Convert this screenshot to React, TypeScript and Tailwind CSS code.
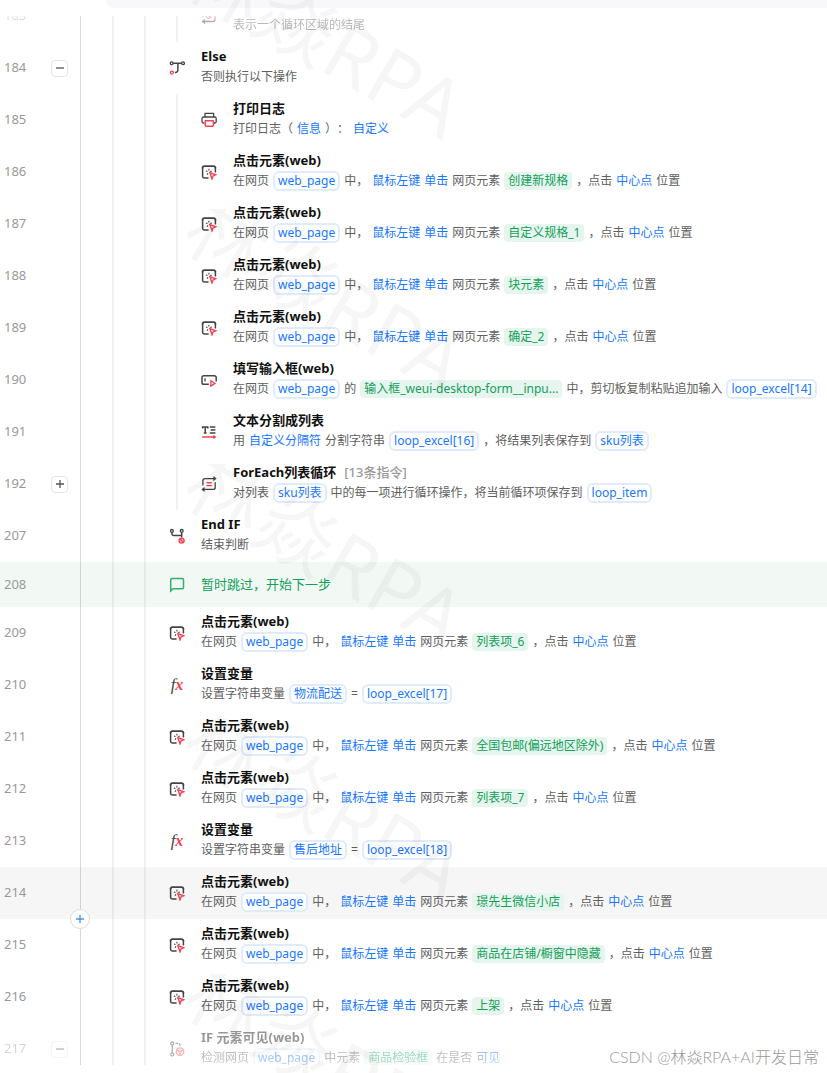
import React from 'react';

type Part = string | { kind: 'link' | 'var' | 'el'; text: string };

type Step = {
  no: number;
  level: 3 | 4;
  icon: React.FC;
  title?: string;
  hint?: string;
  parts?: Part[];
  comment?: string;
  toggle?: 'open' | 'closed';
  selected?: boolean;
  fade?: 'top' | 'bottom';
};

const link = (text: string): Part => ({ kind: 'link', text });
const variable = (text: string): Part => ({ kind: 'var', text });
const element = (text: string): Part => ({ kind: 'el', text });

// ---- Icons ----

const DARK = '#444444';
const RED = '#f5424e';

const Svg: React.FC<{ children: React.ReactNode }> = ({ children }) => (
  <svg viewBox="0 0 16 16" className="h-4 w-4" fill="none" stroke={DARK} strokeWidth="1.3" aria-hidden="true">
    {children}
  </svg>
);

const LoopEndIcon: React.FC = () => (
  <Svg>
    <path d="M2 9V4.5a2 2 0 0 1 2-2h9.5M14 5v6.5a2 2 0 0 1-2 2H2M4 11.5l-2.5 2L4 15.5" />
    <circle cx="7.5" cy="7.5" r="2.8" stroke={RED} />
    <path d="M5.8 6l3.4 3" stroke={RED} />
  </Svg>
);

const ElseIcon: React.FC = () => (
  <Svg>
    <circle cx="2.7" cy="3.3" r="1.4" />
    <circle cx="14" cy="3.3" r="1.4" />
    <path d="M4.2 3.3h8.3M8.9 3.3V10a2.4 2.4 0 0 1-2.4 2.4H6" strokeWidth="1.5" />
    <circle cx="2.9" cy="12.6" r="1.5" stroke={RED} />
  </Svg>
);

const PrintIcon: React.FC = () => (
  <Svg>
    <path d="M4 5V1.4h8.6V5" />
    <path d="M3.2 11H2.4A1.4 1.4 0 0 1 1 9.6V6.6A1.6 1.6 0 0 1 2.6 5h11A1.6 1.6 0 0 1 15.2 6.6v3A1.4 1.4 0 0 1 13.8 11H13" />
    <path d="M3.8 8.8h9M4.2 8.8v4.4a1 1 0 0 0 1 1h6.2a1 1 0 0 0 1-1V8.8" stroke={RED} strokeWidth="1.5" />
  </Svg>
);

const ClickIcon: React.FC = () => (
  <Svg>
    <path d="M7.6 14H3.3a1.7 1.7 0 0 1-1.7-1.7V3.2M14.4 3.2v5.2" strokeWidth="1.5" />
    <path d="M1.6 4.2V3.9a1.7 1.7 0 0 1 1.7-1.7h9.4a1.7 1.7 0 0 1 1.7 1.7v.3" strokeWidth="1.8" />
    <path d="M7.9 4.8v1.6M4.9 7.1l1.6.5M10.8 7.1l-1.6.5M6 10.8l.9-1.5" strokeWidth="1.1" />
    <path d="M8.9 8.6l5.7 2.2-2.6 1.1-1 2.9z" stroke={RED} strokeWidth="1.4" />
  </Svg>
);

const InputIcon: React.FC = () => (
  <Svg>
    <path
      d="M7.8 12.2H2.8A1.8 1.8 0 0 1 1 10.4V5.6a1.8 1.8 0 0 1 1.8-1.8h10.6a1.8 1.8 0 0 1 1.8 1.8v4"
      strokeWidth="1.5"
    />
    <path d="M4 6.2v3.4" />
    <path d="M9.8 8.8l4.2 2.6-4.2 2.6z" stroke={RED} />
  </Svg>
);

const SplitIcon: React.FC = () => (
  <Svg>
    <path d="M1.6 4.4V2.9h5.2v1.5M4.2 2.9v6M2.8 8.9h2.8" strokeWidth="1.5" />
    <path d="M8.8 3h5.6M9.6 6h4.8M8.8 9h5.6" />
    <path d="M1.2 13h12.6M12.4 11.6l1.8 1.4-1.8 1.4" stroke={RED} strokeWidth="1.4" />
  </Svg>
);

const ForEachIcon: React.FC = () => (
  <Svg>
    <path d="M1.9 9.6V4.6a2 2 0 0 1 2-2h10M12.4 0.8l2.2 1.8-2.2 1.8" />
    <path d="M14.2 6.2v5.2a2 2 0 0 1-2 2H2M3.6 11.6l-2.2 1.8 2.2 1.8" />
    <path d="M5.4 6.7h5.4M5.4 9.6h5.4" stroke={RED} strokeWidth="1.4" />
  </Svg>
);

const EndIfIcon: React.FC = () => (
  <Svg>
    <circle cx="2.9" cy="2.9" r="1.4" />
    <circle cx="12.7" cy="2.9" r="1.4" />
    <path d="M2.9 4.4v1.4a1.6 1.6 0 0 0 1.6 1.6h8.2M12.7 4.4v5" strokeWidth="1.5" />
    <circle cx="12.6" cy="12.6" r="2.5" fill="#fbd3d6" stroke={RED} strokeWidth="1.4" />
    <path d="M11 11l3.2 3.2" stroke={RED} />
  </Svg>
);

const CommentIcon: React.FC = () => (
  <Svg>
    <path
      d="M1.7 14V2.8a1.2 1.2 0 0 1 1.2-1.2h10.4a1.2 1.2 0 0 1 1.2 1.2v7.8a1.2 1.2 0 0 1-1.2 1.2H4z"
      stroke="#37ad6e"
      strokeWidth="1.5"
    />
  </Svg>
);

const FxIcon: React.FC = () => (
  <span className="block text-center font-['Liberation_Serif',serif] text-[17px] leading-4 text-[#444444] italic">
    f<span className="text-[16px] font-bold text-[#f5424e]">x</span>
  </span>
);

const IfVisibleIcon: React.FC = () => (
  <Svg>
    <circle cx="3.3" cy="2.5" r="1.5" />
    <circle cx="3.3" cy="13.4" r="1.5" />
    <path d="M3.3 4v7.9" />
    <path d="M6.6 2.3H9a2 2 0 0 1 2 2v.6" strokeDasharray="2.4 1" />
    <circle cx="11" cy="10.7" r="3.8" fill="#fde0e2" stroke={RED} />
    <path d="M11 14.2v-3.6L8 9M11 10.6L14 9" stroke={RED} />
  </Svg>
);

// ---- Data ----

const clickStep = (no: number, level: 3 | 4, target: string, selected = false): Step => ({
  no,
  level,
  icon: ClickIcon,
  title: '点击元素(web)',
  parts: [
    '在网页',
    variable('web_page'),
    '中，',
    link('鼠标左键'),
    link('单击'),
    '网页元素',
    element(target),
    '，点击',
    link('中心点'),
    '位置',
  ],
  selected,
});

const setStep = (no: number, name: string, value: string): Step => ({
  no,
  level: 3,
  icon: FxIcon,
  title: '设置变量',
  parts: ['设置字符串变量', variable(name), '=', variable(value)],
});

const steps: Step[] = [
  { no: 183, level: 4, icon: LoopEndIcon, parts: ['表示一个循环区域的结尾'], fade: 'top' },
  { no: 184, level: 3, icon: ElseIcon, title: 'Else', parts: ['否则执行以下操作'], toggle: 'open' },
  {
    no: 185,
    level: 4,
    icon: PrintIcon,
    title: '打印日志',
    parts: ['打印日志（', link('信息'), '）：', link('自定义')],
  },
  clickStep(186, 4, '创建新规格'),
  clickStep(187, 4, '自定义规格_1'),
  clickStep(188, 4, '块元素'),
  clickStep(189, 4, '确定_2'),
  {
    no: 190,
    level: 4,
    icon: InputIcon,
    title: '填写输入框(web)',
    parts: [
      '在网页',
      variable('web_page'),
      '的',
      element('输入框_weui-desktop-form__inpu...'),
      '中，剪切板复制粘贴追加输入',
      variable('loop_excel[14]'),
    ],
  },
  {
    no: 191,
    level: 4,
    icon: SplitIcon,
    title: '文本分割成列表',
    parts: [
      '用',
      link('自定义分隔符'),
      '分割字符串',
      variable('loop_excel[16]'),
      '，将结果列表保存到',
      variable('sku列表'),
    ],
  },
  {
    no: 192,
    level: 4,
    icon: ForEachIcon,
    title: 'ForEach列表循环',
    hint: '[13条指令]',
    parts: [
      '对列表',
      variable('sku列表'),
      '中的每一项进行循环操作，将当前循环项保存到',
      variable('loop_item'),
    ],
    toggle: 'closed',
  },
  { no: 207, level: 3, icon: EndIfIcon, title: 'End IF', parts: ['结束判断'] },
  { no: 208, level: 3, icon: CommentIcon, comment: '暂时跳过，开始下一步' },
  clickStep(209, 3, '列表项_6'),
  setStep(210, '物流配送', 'loop_excel[17]'),
  clickStep(211, 3, '全国包邮(偏远地区除外)'),
  clickStep(212, 3, '列表项_7'),
  setStep(213, '售后地址', 'loop_excel[18]'),
  clickStep(214, 3, '璟先生微信小店', true),
  clickStep(215, 3, '商品在店铺/橱窗中隐藏'),
  clickStep(216, 3, '上架'),
  {
    no: 217,
    level: 3,
    icon: IfVisibleIcon,
    title: 'IF 元素可见(web)',
    parts: ['检测网页', variable('web_page'), '中元素', element('商品检验框'), '在是否', link('可见')],
    toggle: 'open',
    fade: 'bottom',
  },
];

// ---- Pieces ----

const partClass = {
  link: 'text-[#1677ff]',
  var: 'rounded-md border-2 border-[#dfebff] bg-white px-[3px] leading-4 text-[#1677ff]',
  el: 'rounded bg-[#e6f5ee] px-1 leading-[18px] text-[#14a05a]',
};

const StepText: React.FC<{ part: Part }> = ({ part }) =>
  typeof part === 'string' ? <span>{part}</span> : <span className={partClass[part.kind]}>{part.text}</span>;

const Toggle: React.FC<{ state: 'open' | 'closed' }> = ({ state }) => (
  <button
    type="button"
    aria-label={state === 'open' ? '折叠' : '展开'}
    className="flex h-[17px] w-[17px] items-center justify-center rounded border border-[#e4e4e4] bg-white"
  >
    <svg viewBox="0 0 8 8" className="h-2 w-2" stroke="#555555" strokeWidth="1.3" aria-hidden="true">
      <path d={state === 'open' ? 'M0 4h8' : 'M0 4h8M4 0v8'} />
    </svg>
  </button>
);

// The rows at both ends of the viewport dim towards the edge
const fadeClass = {
  top: '[mask-image:linear-gradient(to_bottom,transparent_40%,rgba(0,0,0,0.45)_60%,rgba(0,0,0,0.5))]',
  bottom: '[mask-image:linear-gradient(to_bottom,rgba(0,0,0,0.45),rgba(0,0,0,0.4)_70%,transparent)]',
};

const StepRow: React.FC<{ step: Step }> = ({ step }) => {
  const Icon = step.icon;
  const fade = step.fade ? fadeClass[step.fade] : '';
  const height = step.comment ? 'h-[45px]' : step.fade === 'bottom' ? 'h-[42px]' : 'h-[52px]';
  const background = step.comment ? 'bg-[#f2f9f5]' : step.selected ? 'bg-[#f6f6f6]' : '';
  // the last row is cut off, so its contents hang from the full row height
  const inner = step.comment ? 'h-[45px]' : 'h-[52px]';

  return (
    <li className={`relative flex whitespace-nowrap ${height} ${background}`}>
      <div className={`flex w-20 shrink-0 items-center pl-1 ${inner} ${fade}`}>
        <span className="w-[47px] text-[13px] text-[#999999]">{step.no}</span>
        {step.toggle && <Toggle state={step.toggle} />}
      </div>
      <div className="w-8 shrink-0 border-l border-black/15" />
      <div className="w-8 shrink-0 border-l-2 border-black/5" />
      {step.level === 4 && <div className="w-8 shrink-0 border-l-2 border-black/5" />}
      <div className="w-[25px] shrink-0 border-l-2 border-black/5" />
      <div className={`flex min-w-0 flex-1 gap-4 ${inner} ${fade}`}>
        <div className="flex w-4 shrink-0 items-center">
          <div className="w-4">
            <Icon />
          </div>
        </div>
        {step.comment ? (
          <p className="self-center text-[13px] text-[#14a05a]">{step.comment}</p>
        ) : (
          <div className="pt-1">
            <h3 className="flex h-5 gap-2 text-[13px] leading-5 font-bold text-[#111111]">
              {step.title}
              {step.hint && <span className="font-medium text-[#999999]">{step.hint}</span>}
            </h3>
            <p className="flex h-[22px] items-center gap-1 text-xs text-[#606060] [text-spacing-trim:space-all]">
              {step.parts?.map((part, i) => <StepText key={i} part={part} />)}
            </p>
          </div>
        )}
      </div>
      {step.selected && (
        <button
          type="button"
          aria-label="插入指令"
          className="absolute -bottom-[10px] left-[70px] z-10 flex h-5 w-5 items-center justify-center rounded-full border border-[#dddddd] bg-white"
        >
          <svg viewBox="0 0 8 8" className="h-2 w-2" stroke="#4a8df8" strokeWidth="1.3" aria-hidden="true">
            <path d="M0 4h8M4 0v8" />
          </svg>
        </button>
      )}
    </li>
  );
};

const Watermark: React.FC = () => (
  <div className="pointer-events-none absolute inset-0 overflow-hidden" aria-hidden="true">
    <div className="-mt-[46px]">
      {[0, 1, 2, 3, 4].map((i) => (
        <div key={i} className="h-[255px] overflow-hidden pl-[214px]">
          <div className="-mt-[27px] w-max origin-top-left rotate-30 text-[80px] leading-none text-black/[0.035]">
            林焱RPA
          </div>
        </div>
      ))}
    </div>
  </div>
);

const App: React.FC = () => {
  return (
    <main className="relative overflow-hidden bg-white pb-2 font-['Noto_Sans','Noto_Sans_CJK_SC',sans-serif]">
      <div className="ml-[106px] h-2 rounded-bl-lg bg-[#f8f8fb]" />
      <div className="mt-2 overflow-hidden">
        <ol className="-mt-[26px]">
          {steps.map((step) => (
            <StepRow key={step.no} step={step} />
          ))}
        </ol>
      </div>
      <Watermark />
      <p className="absolute right-2 bottom-1 font-['Lato','Noto_Sans_CJK_SC',sans-serif] text-base font-light text-[#999999]">
        CSDN @林焱RPA+AI开发日常
      </p>
    </main>
  );
};

export default App;
